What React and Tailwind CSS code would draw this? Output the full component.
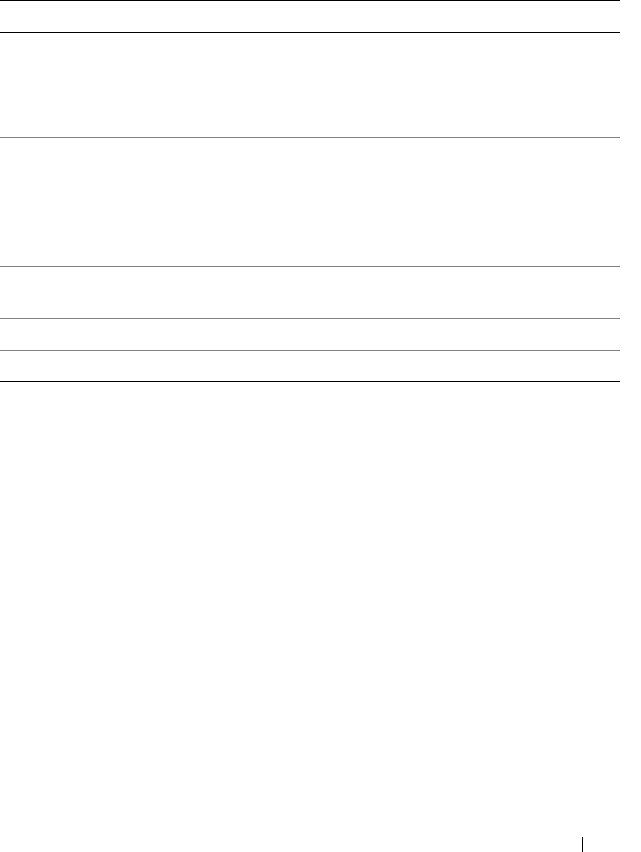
const rows = [
  { h: "h-[105px]" },
  { h: "h-[129px]" },
  { h: "h-[52px]" },
  { h: "h-[32px]" },
  { h: "h-[31px]" },
];

export default function App() {
  return (
    <div className="relative w-[641px] h-[852px] bg-white font-['Liberation_Sans',sans-serif] overflow-hidden">
      <div className="w-[620px] border-t border-black">
        <div className="h-[31px]" />
        <div className="border-t border-black">
          {rows.map((r, i) => (
            <div
              key={i}
              className={
                r.h +
                " " +
                (i < rows.length - 1 ? "border-b border-[#808080]" : "border-b border-black")
              }
            />
          ))}
        </div>
      </div>
      {/* page marker */}
      <div className="absolute left-[582px] top-[837px] w-px h-[15px] bg-black" />
    </div>
  );
}
